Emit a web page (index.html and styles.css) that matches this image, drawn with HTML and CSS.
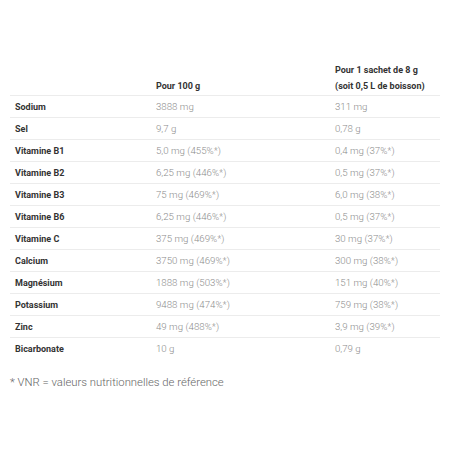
FILE: index.html
```html
<!DOCTYPE html>
<html lang="fr">
<head>
<meta charset="utf-8">
<link rel="stylesheet" href="styles.css">
</head>
<body>
<div class="wrap">
<table class="nut">
<thead>
<tr><th class="c1"></th><th class="c2">Pour 100 g</th><th class="c3">Pour 1 sachet de 8 g<br>(soit 0,5 L de boisson)</th></tr>
</thead>
<tbody>
<tr><td class="lab">Sodium</td><td>3888 mg</td><td>311 mg</td></tr>
<tr><td class="lab">Sel</td><td>9,7 g</td><td>0,78 g</td></tr>
<tr><td class="lab">Vitamine B1</td><td>5,0 mg (455%*)</td><td>0,4 mg (37%*)</td></tr>
<tr><td class="lab">Vitamine B2</td><td>6,25 mg (446%*)</td><td>0,5 mg (37%*)</td></tr>
<tr><td class="lab">Vitamine B3</td><td>75 mg (469%*)</td><td>6,0 mg (38%*)</td></tr>
<tr><td class="lab">Vitamine B6</td><td>6,25 mg (446%*)</td><td>0,5 mg (37%*)</td></tr>
<tr><td class="lab">Vitamine C</td><td>375 mg (469%*)</td><td>30 mg (37%*)</td></tr>
<tr><td class="lab">Calcium</td><td>3750 mg (469%*)</td><td>300 mg (38%*)</td></tr>
<tr><td class="lab">Magnésium</td><td>1888 mg (503%*)</td><td>151 mg (40%*)</td></tr>
<tr><td class="lab">Potassium</td><td>9488 mg (474%*)</td><td>759 mg (38%*)</td></tr>
<tr><td class="lab">Zinc</td><td>49 mg (488%*)</td><td>3,9 mg (39%*)</td></tr>
<tr><td class="lab">Bicarbonate</td><td>10 g</td><td>0,79 g</td></tr>
</tbody>
</table>
<p class="note">* VNR = valeurs nutritionnelles de référence</p>
</div>
</body>
</html>
```
FILE: styles.css
```css
html, body { margin: 0; padding: 0; background: #fff; }
body { font-family: Roboto, "Liberation Sans", sans-serif; }
.wrap { padding: 62px 12px 0 10px; }
.nut { width: 430px; border-collapse: collapse; font-size: 9.7px; }
.nut th, .nut td { text-align: left; padding: 0 5px; height: 21px; vertical-align: middle; }
.nut th { font-size: 9px; font-weight: 700; color: #333; padding-bottom: 1px; height: auto; line-height: 16px; vertical-align: bottom; }
.nut thead tr { border-bottom: 1px solid #ececec; }
.nut tbody tr { border-bottom: 1px solid #ececec; }
.nut tbody tr:last-child { border-bottom: none; }
.c1 { width: 131px; }
.c2 { width: 169px; }
.lab { font-size: 9px; font-weight: 700; color: #333; }
.nut td:not(.lab) { font-weight: 300; color: #8c8c8c; }
.note { margin: 17px 0 0; font-size: 11.3px; font-weight: 300; color: #666; }
```
